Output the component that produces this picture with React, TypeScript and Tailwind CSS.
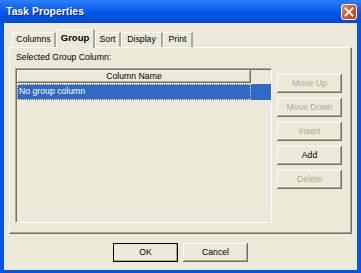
export default function App() {
    const raised =
        "shadow-[inset_-1px_-1px_0_#716f64,inset_1px_1px_0_#ffffff,inset_-2px_-2px_0_#aca899]";
    const btn = `h-[19px] w-[65px] text-[8.7px] leading-none flex items-center justify-center bg-[#ece9d8] ${raised}`;

    const tabs = [
        { label: "Columns", w: "w-[44px]" },
        { label: "Group", w: "w-[39px]", active: true },
        { label: "Sort", w: "w-[26px]" },
        { label: "Display", w: "w-[42px]" },
        { label: "Print", w: "w-[30px]" },
    ];

    return (
        <div className="w-[361px] h-[273px] bg-[#0654e2] flex flex-col font-['Liberation_Sans',Arial,sans-serif] text-black select-none">
            {/* title bar */}
            <div className="h-[23px] flex items-center bg-gradient-to-b from-[#2c80fa] via-[#0558ea] to-[#0049d4]">
                <span className="ml-[6px] text-white font-bold text-[10.3px] tracking-[0.1px] [text-shadow:1px_1px_0_#0a2a8a]">
                    Task Properties
                </span>
                <div className="ml-auto mr-[4px] w-[16px] h-[16px] rounded-[3px] border border-white bg-gradient-to-br from-[#f08560] via-[#e0502a] to-[#c8391a] flex items-center justify-center">
                    <svg width="10" height="10" viewBox="0 0 10 10">
                        <path d="M1.5 1.5 L8.5 8.5 M8.5 1.5 L1.5 8.5" stroke="#ffffff" strokeWidth="2" strokeLinecap="square" />
                    </svg>
                </div>
            </div>

            {/* body */}
            <div className="flex-1 mx-[4px] mb-[3px] bg-[#ece9d8] flex flex-col">
                {/* tab strip */}
                <div className="ml-[8px] mt-[6px] h-[18px] flex items-end relative z-10">
                    {tabs.map((t) =>
                        t.active ? (
                            <div
                                key={t.label}
                                className={`${t.w} h-[19px] -mb-[1px] bg-[#ece9d8] border-t border-l border-white border-r-2 border-r-[#aca899] flex items-center justify-center text-[9.5px] font-bold pb-[2px]`}
                            >
                                {t.label}
                            </div>
                        ) : (
                            <div
                                key={t.label}
                                className={`${t.w} h-[15px] bg-[#ece9d8] border-t border-l border-white border-r-2 border-r-[#aca899] flex items-center justify-center text-[8.7px]`}
                            >
                                {t.label}
                            </div>
                        )
                    )}
                </div>

                {/* panel */}
                <div className="mx-[5px] h-[187px] border-t border-l border-white border-b border-r border-b-[#716f64] border-r-[#716f64] shadow-[inset_-1px_-1px_0_#aca899] flex flex-col pl-[5px] pt-[4px]">
                    <div className="ml-[1px] h-[10px] text-[8.7px] leading-[10px]">Selected Group Column:</div>
                    <div className="mt-[6px] flex">
                        {/* list view */}
                        <div className="w-[257px] h-[155px] border-t border-l border-[#aca899] border-b border-r border-b-white border-r-white shadow-[inset_1px_1px_0_#716f64] pt-[1px] pl-[1px] flex flex-col">
                            <div className="h-[13px] flex">
                                <div className={`w-[234px] h-full flex items-center justify-center text-[8.7px] ${raised}`}>
                                    Column Name
                                </div>
                            </div>
                            <div className="mt-[1px] h-[16px] bg-[#316ac5] flex">
                                <div className="w-[234px] h-full outline outline-1 outline-dotted outline-white -outline-offset-1 flex items-center pl-[2px] text-white text-[8.7px]">
                                    No group column
                                </div>
                            </div>
                        </div>

                        {/* side buttons */}
                        <div className="ml-[5px] pt-[6px] flex flex-col gap-[5px]">
                            <div className={`${btn} text-[#aca899]`}>Move Up</div>
                            <div className={`${btn} text-[#aca899]`}>Move Down</div>
                            <div className={`${btn} text-[#aca899]`}>Insert</div>
                            <div className={btn}>Add</div>
                            <div className={`${btn} text-[#aca899]`}>Delete</div>
                        </div>
                    </div>
                </div>

                {/* dialog buttons */}
                <div className="mt-[9px] flex justify-center gap-[5px]">
                    <div className={`${btn} w-[64px] outline outline-1 outline-black -outline-offset-1`}>OK</div>
                    <div className={`${btn} w-[64px]`}>Cancel</div>
                </div>
            </div>
        </div>
    );
}
